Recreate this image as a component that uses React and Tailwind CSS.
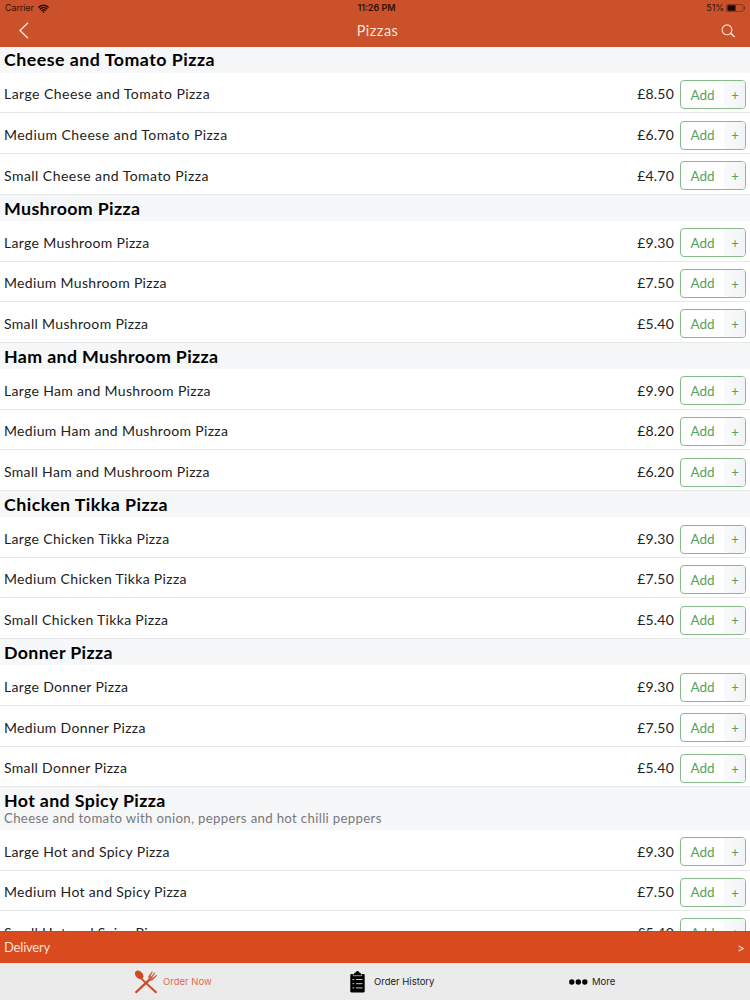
import { Wifi } from 'lucide-react';

const sections = [
  {
    name: 'Cheese and Tomato Pizza',
    short: 'Cheese and Tomato',
    tracking: 'tracking-[0.46px]',
    titleTracking: 'tracking-[0.49px]',
    prices: ['8.50', '6.70', '4.70'],
  },
  { name: 'Mushroom Pizza', short: 'Mushroom', prices: ['9.30', '7.50', '5.40'] },
  { name: 'Ham and Mushroom Pizza', short: 'Ham and Mushroom', prices: ['9.90', '8.20', '6.20'] },
  { name: 'Chicken Tikka Pizza', short: 'Chicken Tikka', titleTracking: 'tracking-[0.45px]', prices: ['9.30', '7.50', '5.40'] },
  { name: 'Donner Pizza', short: 'Donner', prices: ['9.30', '7.50', '5.40'] },
  {
    name: 'Hot and Spicy Pizza',
    short: 'Hot and Spicy',
    note: 'Cheese and tomato with onion, peppers and hot chilli peppers',
    prices: ['9.30', '7.50', '5.40'],
  },
];

const sizes = ['Large', 'Medium', 'Small'];

function Header() {
  return (
    <header className="h-[47px] shrink-0 bg-[#cb512b]">
      <div className="grid h-4 grid-cols-3 items-center pl-[5px] pr-1 font-['Inter',sans-serif] text-[9px] text-[#321008]">
        <div className="flex items-center gap-1">
          <span className="tracking-[-0.1px]">Carrier</span>
          <Wifi className="size-[11px]" strokeWidth={3.5} />
        </div>
        <span className="pl-[2px] text-center font-semibold">11:26 PM</span>
        <div className="flex items-center justify-end gap-[2px]">
          <span className="tracking-[-0.1px]">51%</span>
          <svg width="20" height="8" viewBox="0 0 20 8">
            <rect x="0.5" y="0.5" width="16.5" height="7" rx="1" fill="none" stroke="#7a2e17" strokeWidth="0.8" />
            <rect x="1.5" y="1.3" width="8" height="5.4" fill="#160502" />
            <path d="M18.5 2.5v3" stroke="#7a2e17" />
          </svg>
        </div>
      </div>
      <div className="grid h-[29px] grid-cols-3 items-center pl-[19px] pr-[14px] text-[#fbe3d6]">
        <svg width="10" height="17" viewBox="0 0 10 17" fill="none" stroke="currentColor" strokeWidth="1.5">
          <path d="M9 0.7 1 8.5 9 16.3" />
        </svg>
        <h1 className="text-center text-[14.5px] leading-[29px] tracking-[0.5px]">Pizzas</h1>
        <svg className="justify-self-end" width="15" height="14" viewBox="0 0 15 14" fill="none" stroke="currentColor">
          <circle cx="6" cy="5.8" r="4.9" strokeWidth="1.1" />
          <path d="m9.6 9.2 4 3.8" strokeWidth="1.6" />
        </svg>
      </div>
    </header>
  );
}

function Item({ name, price, tracking = 'tracking-[0.33px]' }) {
  return (
    <li className="flex h-[40.55px] items-center border-b border-[#e6e7e8] pl-1 pr-[4px] pt-[4px]">
      <span className={`flex-1 pb-[1.5px] text-[14px] text-[#222] ${tracking}`}>{name}</span>
      <span className="mr-[6px] pb-[1.5px] text-[14px] tracking-[0.2px] text-[#222]">£{price}</span>
      <button className="flex h-[29px] w-[66px] overflow-hidden rounded-[4px] border border-[#86bb89] bg-white text-[#55a35a]">
        <span className="flex h-full w-[43px] items-center justify-center text-[13.5px]">Add</span>
        <span className="flex h-full flex-1 items-center justify-center bg-linear-to-r from-[#f9fafb] to-[#f1f4f6] pt-[2px] pl-px text-[13px]">+</span>
      </button>
    </li>
  );
}

function Section({ section }) {
  return (
    <section>
      <div className={section.note ? 'h-[43px] bg-[#f6f7f9] pl-1' : 'h-[26.5px] bg-[#f6f7f9] pl-1'}>
        <h2 className={`text-[17.8px] leading-[26.5px] font-bold text-black ${section.titleTracking || 'tracking-[0.36px]'}`}>
          {section.name}
        </h2>
        {section.note && (
          <p className="-mt-[4.5px] text-[13.2px] leading-[18px] tracking-[0.34px] text-[#76777a]">{section.note}</p>
        )}
      </div>
      <ul>
        {section.prices.map((price, i) => (
          <Item key={sizes[i]} name={`${sizes[i]} ${section.short} Pizza`} price={price} tracking={section.tracking} />
        ))}
      </ul>
    </section>
  );
}

function CutleryIcon() {
  return (
    <svg width="24" height="24" viewBox="0 0 24 24" fill="#ce4c25">
      <ellipse cx="5.2" cy="4.8" rx="3.5" ry="5" transform="rotate(-43 5.2 4.8)" />
      <path d="M7.6 7.8 23.3 21.9l-1.6 1.6L6.4 9.1z" />
      <path d="M15.2 8.2.7 22l1.6 1.6L16.9 10z" />
      <path d="M14.2 6.2 18 1.3l.8.6-2.3 4 .6.5 3.2-4 1 .8-3.1 4.1.5.5 3.9-3 .6.8-4.3 4.5c-1.8 1.6-4.8-.6-4.7-3.9z" fillOpacity=".85" />
    </svg>
  );
}

function ClipboardIcon() {
  return (
    <svg width="15" height="22" viewBox="0 0 15 22">
      <path d="M1.5 3H4c.2-1.2 1.4-1.5 2-1.7.3-.9.8-1.3 1.5-1.3S8.7.4 9 1.3c.6.2 1.8.5 2 1.7h2.5c.7 0 1.2.5 1.2 1.2v16c0 .7-.5 1.2-1.2 1.2h-12c-.7 0-1.2-.5-1.2-1.2v-16C.3 3.5.8 3 1.5 3z" />
      <path d="M3.3 3.2v1.5h8.4V3.2" fill="none" stroke="#d5d5d5" strokeWidth=".7" />
      <path d="M2.5 8.5h1.8M2.5 12.7h1.8M2.5 16.9h1.8M6 8.5h6.5M6 12.7h6.5M6 16.9h6.5" stroke="#c8c8c8" />
    </svg>
  );
}

function TabBar() {
  return (
    <nav className="grid h-[37px] shrink-0 grid-cols-[250px_1fr_1fr] bg-[#ebebec] font-['Inter',sans-serif] text-[9.5px] text-[#222]">
      <a className="flex items-center pl-[134px] pt-px text-[#d96c50]">
        <CutleryIcon />
        <span className="ml-[5px]">Order Now</span>
      </a>
      <a className="flex items-center pl-[100px] pt-px">
        <ClipboardIcon />
        <span className="ml-[9px]">Order History</span>
      </a>
      <a className="flex items-center pl-[69px] pt-px">
        <svg width="19" height="6" viewBox="0 0 19 6">
          <circle cx="2.8" cy="3" r="2.7" />
          <circle cx="9.3" cy="3" r="2.7" />
          <circle cx="15.8" cy="3" r="2.7" />
        </svg>
        <span className="ml-1">More</span>
      </a>
    </nav>
  );
}

export default function App() {
  return (
    <div className="flex h-[1000px] w-[750px] flex-col overflow-hidden bg-white font-['Lato',sans-serif]">
      <Header />
      <main className="min-h-0 flex-1 overflow-hidden">
        <div className="-mt-[0.6px]">
          {sections.map((section) => (
            <Section key={section.name} section={section} />
          ))}
        </div>
      </main>
      <div className="flex h-8 shrink-0 items-center justify-between border-t border-[#a94b58] bg-[#d94a1e] pl-1 pr-[5px] text-[#fbe3d6]">
        <span className="text-[13px] tracking-[-0.2px]">Delivery</span>
        <span className="text-[14px]">&gt;</span>
      </div>
      <TabBar />
    </div>
  );
}
